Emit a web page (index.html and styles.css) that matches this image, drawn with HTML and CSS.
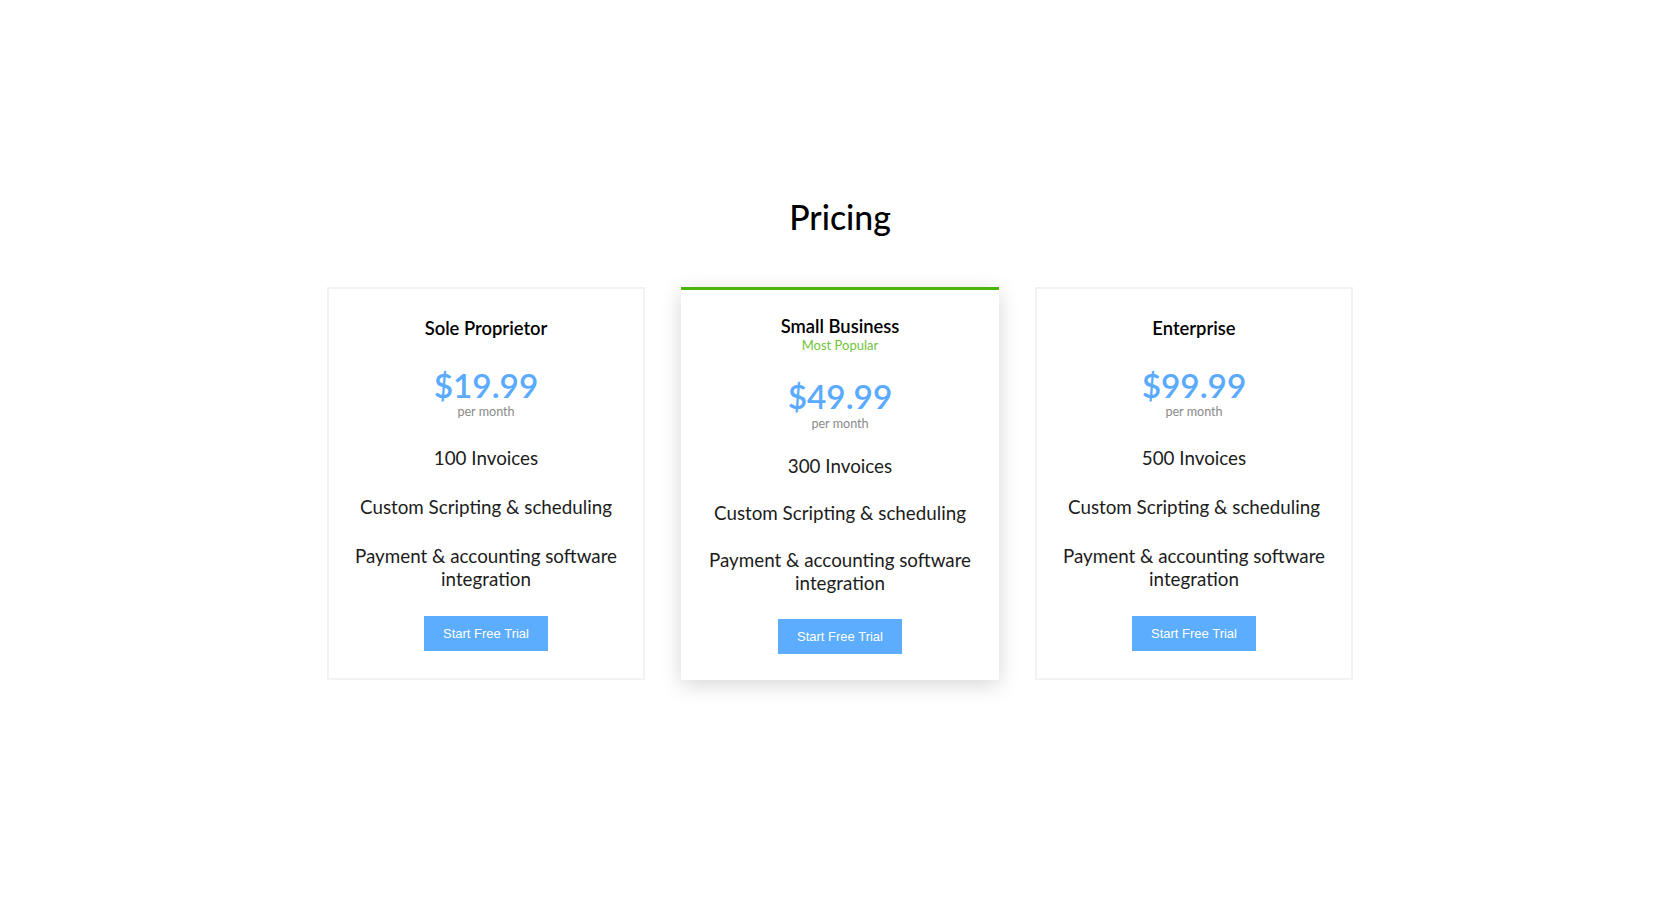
FILE: index.html
```html
<!DOCTYPE html>
<html lang="en">
<head>
<meta charset="utf-8">
<title>Pricing</title>
<link rel="stylesheet" href="styles.css">
</head>
<body>
<section class="pricing">
  <h1 class="pricing-title">Pricing</h1>
  <div class="plans">
    <div class="plan">
      <h2 class="plan-name">Sole Proprietor</h2>
      <div class="plan-price">$19.99</div>
      <div class="plan-period">per month</div>
      <p class="plan-feature">100 Invoices</p>
      <p class="plan-feature">Custom Scripting &amp; scheduling</p>
      <p class="plan-feature">Payment &amp; accounting software integration</p>
      <a class="plan-btn" href="#">Start Free Trial</a>
    </div>
    <div class="plan plan-featured">
      <h2 class="plan-name">Small Business</h2>
      <div class="plan-badge">Most Popular</div>
      <div class="plan-price">$49.99</div>
      <div class="plan-period">per month</div>
      <p class="plan-feature">300 Invoices</p>
      <p class="plan-feature">Custom Scripting &amp; scheduling</p>
      <p class="plan-feature">Payment &amp; accounting software integration</p>
      <a class="plan-btn" href="#">Start Free Trial</a>
    </div>
    <div class="plan">
      <h2 class="plan-name">Enterprise</h2>
      <div class="plan-price">$99.99</div>
      <div class="plan-period">per month</div>
      <p class="plan-feature">500 Invoices</p>
      <p class="plan-feature">Custom Scripting &amp; scheduling</p>
      <p class="plan-feature">Payment &amp; accounting software integration</p>
      <a class="plan-btn" href="#">Start Free Trial</a>
    </div>
  </div>
</section>
</body>
</html>
```
FILE: styles.css
```css
html, body {
  margin: 0;
  padding: 0;
  background: #ffffff;
}

body {
  font-family: Lato, "Open Sans", sans-serif;
  color: #1c1c1c;
}

.pricing {
  padding-top: 197px;
  display: flex;
  flex-direction: column;
  align-items: center;
}

.pricing-title {
  margin: 0;
  font-size: 33.8px;
  line-height: 40px;
  font-weight: 500;
  color: #000;
}

.plans {
  margin-top: 50px;
  display: grid;
  grid-template-columns: repeat(3, 318px);
  gap: 36px;
  align-items: stretch;
  padding-bottom: 40px;
}

.plan {
  box-sizing: border-box;
  border: 2px solid #f2f2f2;
  background: #fff;
  padding: 29px 16px 27px;
  display: flex;
  flex-direction: column;
  align-items: center;
  text-align: center;
}

.plan-name {
  margin: 0;
  font-size: 18.4px;
  line-height: 20px;
  font-weight: 600;
  color: #000;
}

.plan-badge {
  margin-top: 1px;
  font-size: 13px;
  line-height: 16px;
  color: #72c23a;
}

.plan-price {
  margin-top: 29px;
  font-size: 33.4px;
  line-height: 36px;
  font-weight: 600;
  color: #5aabff;
}

.plan-period {
  margin-top: 1px;
  font-size: 12.6px;
  line-height: 16px;
  color: #8a8a8a;
}

.plan-feature {
  margin: 26px 0 0;
  font-size: 18.8px;
  line-height: 23px;
  color: #1c1c1c;
  max-width: 280px;
}

.plan-btn {
  margin-top: 26px;
  display: block;
  height: 35px;
  line-height: 35px;
  padding: 0 19px;
  background: #5cadfd;
  color: #fff;
  font-family: "Liberation Sans", Arial, sans-serif;
  font-size: 13px;
  text-decoration: none;
}

.plan-featured {
  border: none;
  border-top: 3px solid #4cb50a;
  padding-top: 26px;
  padding-bottom: 23px;
  box-shadow: 0 5px 20px rgba(0, 0, 0, 0.16);
}

.plan-featured .plan-price {
  margin-top: 25px;
}

.plan-featured .plan-period {
  margin-top: 2px;
}

.plan-featured .plan-feature {
  margin-top: 22px;
}

.plan-featured .plan-feature + .plan-feature {
  margin-top: 24px;
}

.plan-featured .plan-btn {
  margin-top: 25px;
}
```
